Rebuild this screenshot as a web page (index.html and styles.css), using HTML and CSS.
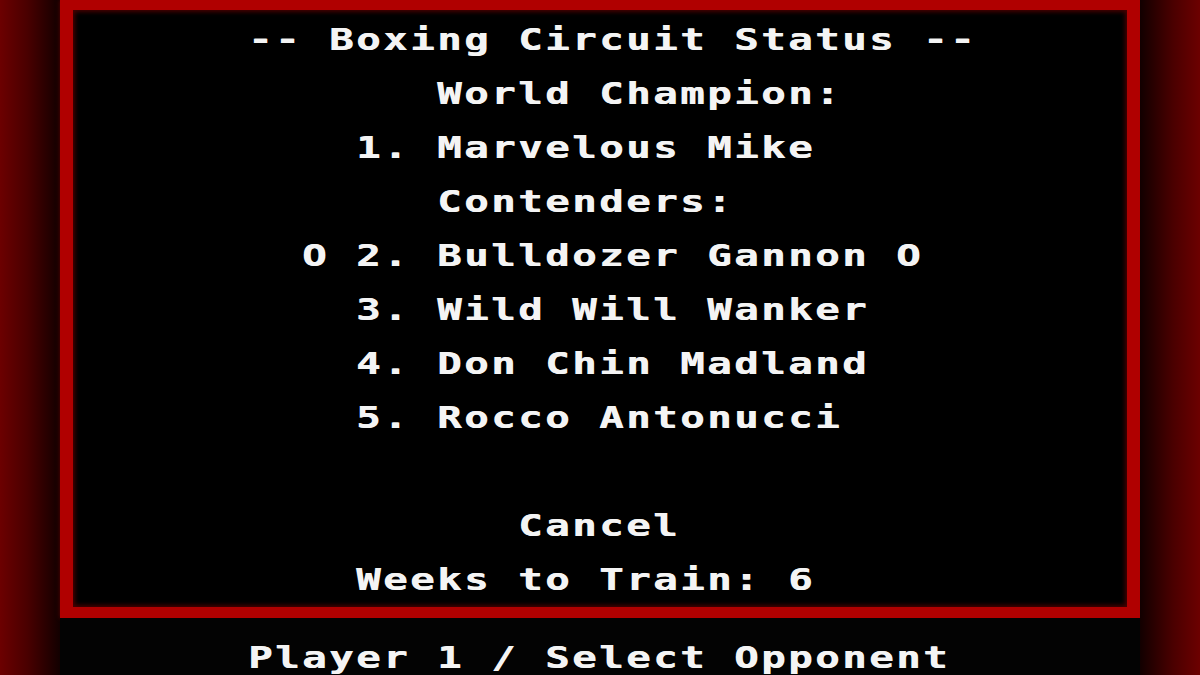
FILE: index.html
```html
<!DOCTYPE html>
<html>
<head>
<meta charset="utf-8">
<link rel="stylesheet" href="styles.css">
</head>
<body>
<div class="screen">
  <div class="side side-left"></div>
  <div class="main">
    <div class="frame">
<pre class="text">-- Boxing Circuit Status --
       World Champion:
    1. Marvelous Mike
       Contenders:
  O 2. Bulldozer Gannon O
    3. Wild Will Wanker
    4. Don Chin Madland
    5. Rocco Antonucci

          Cancel
    Weeks to Train: 6</pre>
    </div>
    <div class="footer">
<pre class="text">Player 1 / Select Opponent</pre>
    </div>
  </div>
  <div class="side side-right"></div>
</div>
</body>
</html>
```
FILE: styles.css
```css
html, body {
  margin: 0;
  padding: 0;
  background: #000;
}
.screen {
  width: 1200px;
  height: 675px;
  display: flex;
  overflow: hidden;
}
.side {
  width: 60px;
  flex: none;
}
.side-left {
  background: linear-gradient(to right, #6c0000 0%, #4a0000 45%, #120000 100%);
}
.side-right {
  background: linear-gradient(to left, #6c0000 0%, #4a0000 45%, #120000 100%);
}
.main {
  width: 1080px;
  flex: none;
  background: #000;
  display: flex;
  flex-direction: column;
}
.frame {
  height: 598px;
  border-style: solid;
  border-color: #b00000;
  border-width: 10px 13px 11px 13px;
  box-shadow: inset 0 0 4px 2px rgba(120, 0, 0, 0.6), 0 0 4px rgba(150, 0, 0, 0.6);
  padding: 3px 0 0 175px;
  box-sizing: content-box;
}
.text {
  margin: 0;
  font-family: "DejaVu Sans Mono", "Liberation Mono", monospace;
  font-weight: bold;
  font-size: 30px;
  letter-spacing: 1.94px;
  line-height: 54px;
  color: #f4f4f4;
  white-space: pre;
  text-shadow: 0.5px 0 0 #f4f4f4;
  transform: scaleX(1.35);
  transform-origin: 0 0;
}
.footer {
  flex: 1;
  padding: 13px 0 0 188px;
  background: #030303;
}
```
